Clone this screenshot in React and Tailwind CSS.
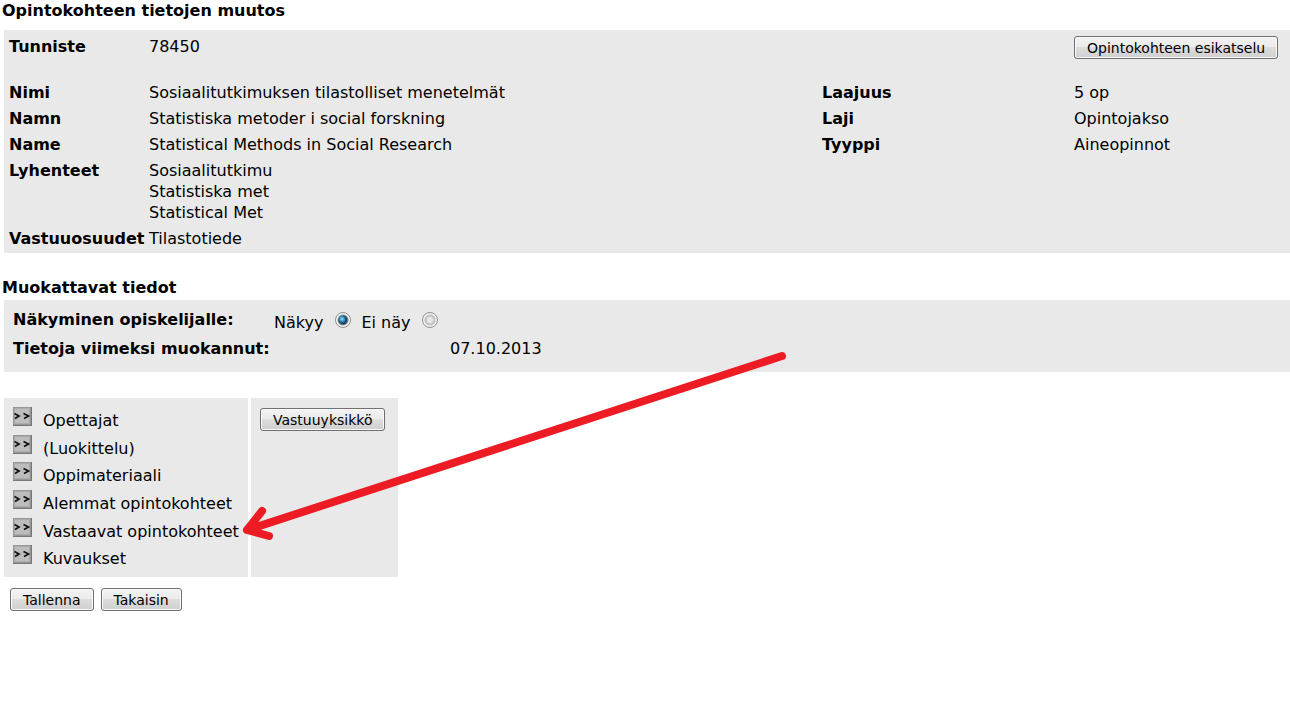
const names = [
  { label: 'Nimi', value: 'Sosiaalitutkimuksen tilastolliset menetelmät', label2: 'Laajuus', value2: '5 op' },
  { label: 'Namn', value: 'Statistiska metoder i social forskning', label2: 'Laji', value2: 'Opintojakso' },
  { label: 'Name', value: 'Statistical Methods in Social Research', label2: 'Tyyppi', value2: 'Aineopinnot' },
];

const links = [
  'Opettajat',
  '(Luokittelu)',
  'Oppimateriaali',
  'Alemmat opintokohteet',
  'Vastaavat opintokohteet',
  'Kuvaukset',
];

function Button({ children }) {
  return (
    <button
      type="button"
      className="h-[23px] whitespace-nowrap rounded-[3px] border border-[#707070] bg-[linear-gradient(#f2f2f2_0%,#ebebeb_50%,#dddddd_50%,#cfcfcf_100%)] px-3 text-sm leading-5 shadow-[inset_0_0_0_1px_#fafafa]"
    >
      {children}
    </button>
  );
}

function Th({ children }) {
  return (
    <th scope="row" className="whitespace-nowrap pt-0.5 pb-[3px] text-left align-top font-bold">
      {children}
    </th>
  );
}

function Td({ children }) {
  return <td className="pt-0.5 pb-[3px] align-top">{children}</td>;
}

function ArrowsIcon() {
  return (
    <svg width="19" height="19" viewBox="0 0 19 19" aria-hidden="true">
      <rect width="19" height="19" fill="#777" />
      <rect width="18" height="18" fill="#969696" />
      <rect x="1" y="1" width="16" height="16" fill="#ababab" />
      <rect x="2" y="2" width="14" height="14" fill="#bdbdbd" />
      <path d="M1.5 6.5L6 9L2 11.5M10.5 6.5L15.5 9L11 11.5" fill="none" stroke="#111" strokeWidth="1.7" />
    </svg>
  );
}

function Radio({ id, defaultChecked }) {
  return (
    <input
      type="radio"
      id={id}
      name="visibility"
      defaultChecked={defaultChecked}
      className="mt-[3px] size-4 appearance-none rounded-full border border-[#8e8f8f] bg-[radial-gradient(circle_at_center,#eeeeee_0,#dddfe1_3px,#c4c7ca_4px,#b9bcbf_5px,#f6f6f6_6px)] checked:bg-[radial-gradient(circle_at_6px_6px,#a8e4fb_0,#3d9ccc_2px,transparent_4px),radial-gradient(circle_at_center,#1f6f9c_0,#174f73_3px,#1b3a50_4px,#f6f6f6_6px)]"
    />
  );
}

export default function App() {
  return (
    <main className="relative min-h-screen overflow-x-hidden bg-white font-['DejaVu_Sans',Verdana,sans-serif] text-base leading-[21px] text-black">
      <h1 className="pl-0.5 font-bold">Opintokohteen tietojen muutos</h1>

      <section className="mt-[9px] ml-1 bg-[#e9e9e9] pt-1 pb-px pl-[5px]">
        <table className="w-full table-fixed border-collapse">
          <colgroup>
            <col className="w-[140px]" />
            <col />
            <col className="w-[252px]" />
            <col className="w-[216px]" />
          </colgroup>
          <tbody>
            <tr className="h-[46px]">
              <Th>Tunniste</Th>
              <Td>78450</Td>
              <td />
              <td className="pt-0.5 align-top">
                <Button>Opintokohteen esikatselu</Button>
              </td>
            </tr>
            {names.map((row) => (
              <tr key={row.label}>
                <Th>{row.label}</Th>
                <Td>{row.value}</Td>
                <Th>{row.label2}</Th>
                <Td>{row.value2}</Td>
              </tr>
            ))}
            <tr>
              <Th>Lyhenteet</Th>
              <Td>
                Sosiaalitutkimu
                <br />
                Statistiska met
                <br />
                Statistical Met
              </Td>
            </tr>
            <tr>
              <Th>Vastuuosuudet</Th>
              <Td>Tilastotiede</Td>
            </tr>
          </tbody>
        </table>
      </section>

      <h2 className="mt-6 pl-0.5 font-bold">Muokattavat tiedot</h2>

      <section className="mt-0.5 ml-1 bg-[#e9e9e9] pt-[9px] pb-[13px] pl-[9px]">
        <fieldset className="flex h-[29px]">
          <legend className="float-left w-[261px] font-bold">Näkyminen opiskelijalle:</legend>
          <div className="flex items-start">
            <label htmlFor="visible" className="mr-3 pt-[3px]">Näkyy</label>
            <Radio id="visible" defaultChecked />
            <label htmlFor="hidden" className="mr-3 ml-2.5 pt-[3px]">Ei näy</label>
            <Radio id="hidden" />
          </div>
        </fieldset>
        <div className="flex">
          <span className="w-[437px] font-bold">Tietoja viimeksi muokannut:</span>
          <span>07.10.2013</span>
        </div>
      </section>

      <div className="mt-[26px] ml-1 flex gap-[3px]">
        <nav className="w-[244px] bg-[#e9e9e9] pt-[9px] pb-1 pl-[9px]">
          <ul className="grid h-[166px] grid-rows-6">
            {links.map((link) => (
              <li key={link}>
                <a href="#" className="flex items-start gap-[11px] whitespace-nowrap">
                  <ArrowsIcon />
                  <span className="pt-[3px]">{link}</span>
                </a>
              </li>
            ))}
          </ul>
        </nav>
        <div className="flex w-[147px] items-start bg-[#e9e9e9] pt-2.5 pl-[9px]">
          <Button>Vastuuyksikkö</Button>
        </div>
      </div>

      <div className="mt-[11px] ml-2.5 flex gap-[7px]">
        <Button>Tallenna</Button>
        <Button>Takaisin</Button>
      </div>

      {/* arrow pointing at the equivalent courses link */}
      <svg className="pointer-events-none absolute top-[340px] left-[230px]" width="570" height="210" viewBox="230 340 570 210" fill="none" aria-hidden="true">
        <path d="M782 356L247 530M262 511L247 530L269 536" stroke="#ed1c24" strokeWidth="8" strokeLinecap="round" strokeLinejoin="round" />
        <path d="M247 530L258 518L256 527L262 534Z" fill="#ed1c24" />
      </svg>
    </main>
  );
}
